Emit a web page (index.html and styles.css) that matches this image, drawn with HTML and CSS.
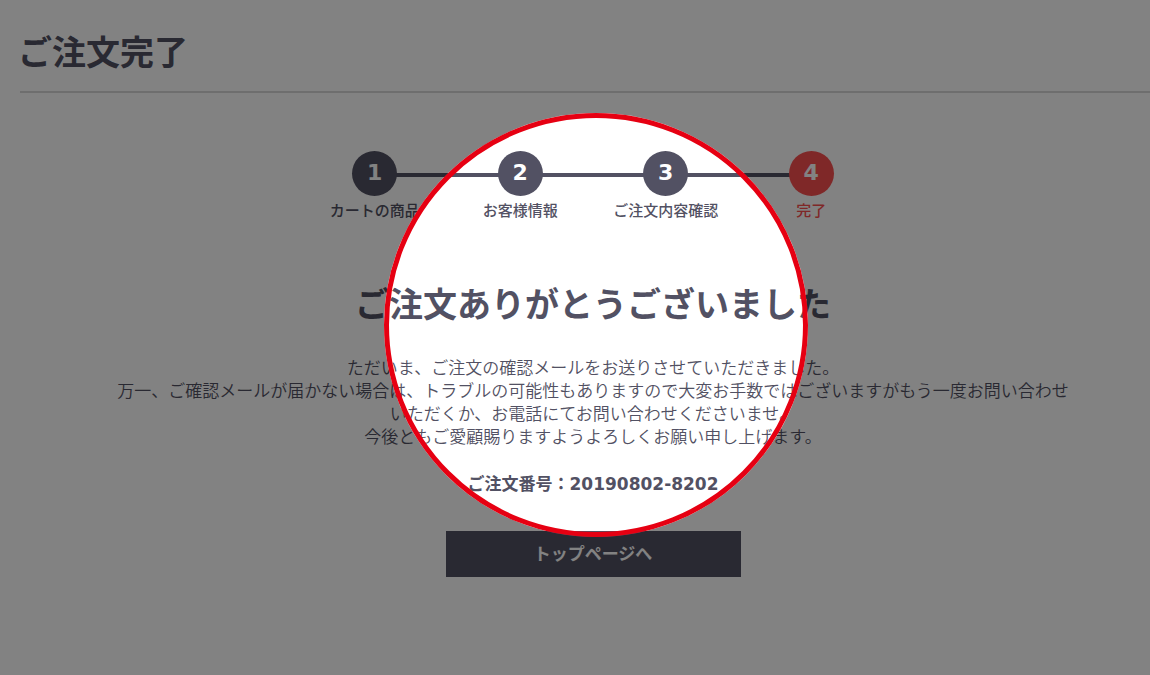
FILE: index.html
```html
<!DOCTYPE html>
<html lang="ja">
<head>
<meta charset="utf-8">
<title>ご注文完了</title>
<meta name="viewport" content="width=device-width, initial-scale=1">
<link rel="stylesheet" href="styles.css">
</head>
<body>
<header class="page-header">
  <h1 class="page-title">ご注文完了</h1>
</header>
<main class="content">
  <ol class="steps">
    <li class="step"><span class="step-number">1</span><span class="step-label">カートの商品</span></li>
    <li class="step"><span class="step-number">2</span><span class="step-label">お客様情報</span></li>
    <li class="step"><span class="step-number">3</span><span class="step-label">ご注文内容確認</span></li>
    <li class="step step-current" aria-current="step"><span class="step-number">4</span><span class="step-label">完了</span></li>
  </ol>
  <h2 class="thanks">ご注文ありがとうございました</h2>
  <p class="message">ただいま、ご注文の確認メールをお送りさせていただきました。<br>万一、ご確認メールが届かない場合は、トラブルの可能性もありますので大変お手数ではございますがもう一度お問い合わせいただくか、お電話にてお問い合わせくださいませ。<br>今後ともご愛顧賜りますようよろしくお願い申し上げます。</p>
  <p class="order">ご注文番号：<span class="order-number">20190802-8202</span></p>
  <a class="top-button" href="#">トップページへ</a>
</main>
<div class="spotlight" aria-hidden="true"><div class="spotlight-ring"></div></div>
</body>
</html>
```
FILE: styles.css
```css
:root {
  --ink: #525163;
  --accent: #fa5050;
  --jp: "Noto Sans CJK JP", sans-serif;
}

* { box-sizing: border-box; }

body {
  margin: 0;
  background: #fff;
  color: var(--ink);
  font-family: var(--jp);
  font-size: 17px;
  line-height: 23px;
}

.page-header {
  margin-left: 20px;
  padding: 27px 0 17px;
  border-bottom: 2px solid #d8d8d8;
}

.page-title,
.thanks {
  margin: 0;
  font-size: 34px;
  line-height: 47px;
  font-weight: 700;
}

.page-title { margin-left: -2px; }

.content {
  display: flex;
  flex-direction: column;
  align-items: center;
  padding: 58px 0 40px 36px;
  text-align: center;
}

.steps {
  display: flex;
  width: 100%;
  max-width: 582px;
  margin: 0;
  padding: 0;
  list-style: none;
}

.step {
  position: relative;
  display: flex;
  flex: 1 1 0;
  flex-direction: column;
  align-items: center;
  gap: 2px;
}

/* connector to the previous step */
.step + .step::before {
  content: "";
  position: absolute;
  z-index: -1;
  top: 22px;
  right: 50%;
  width: 100%;
  height: 4px;
  background: var(--ink);
}

.step-number {
  width: 45px;
  height: 45px;
  border-radius: 50%;
  background: var(--ink);
  color: #fff;
  font: 700 22px/44px "DejaVu Sans", sans-serif;
}

.step-label {
  font-size: 15px;
  line-height: 23px;
  font-weight: 500;
  white-space: nowrap;
}

.step-current { color: var(--accent); }
.step-current .step-number { background: var(--accent); }

.thanks { margin-top: 58px; }

.message {
  max-width: 960px;
  margin: 29px 0 0;
  font-weight: 350;
}

.order {
  margin: 24px 0 0;
  font-weight: 700;
}

.order-number {
  font-family: "DejaVu Sans", sans-serif;
}

.top-button {
  width: 100%;
  max-width: 295px;
  margin-top: 35px;
  padding: 10px 0 13px;
  background: var(--ink);
  color: #fff;
  font-weight: 700;
  text-decoration: none;
}

.spotlight {
  position: absolute;
  inset: 0;
  overflow: hidden;
  pointer-events: none;
}

.spotlight-ring {
  position: absolute;
  top: 113px;
  left: 384px;
  width: 424px;
  height: 424px;
  border: 5px solid #e60012;
  border-radius: 50%;
  box-shadow: 0 0 0 2000px rgba(0, 0, 0, 0.49);
}
```
